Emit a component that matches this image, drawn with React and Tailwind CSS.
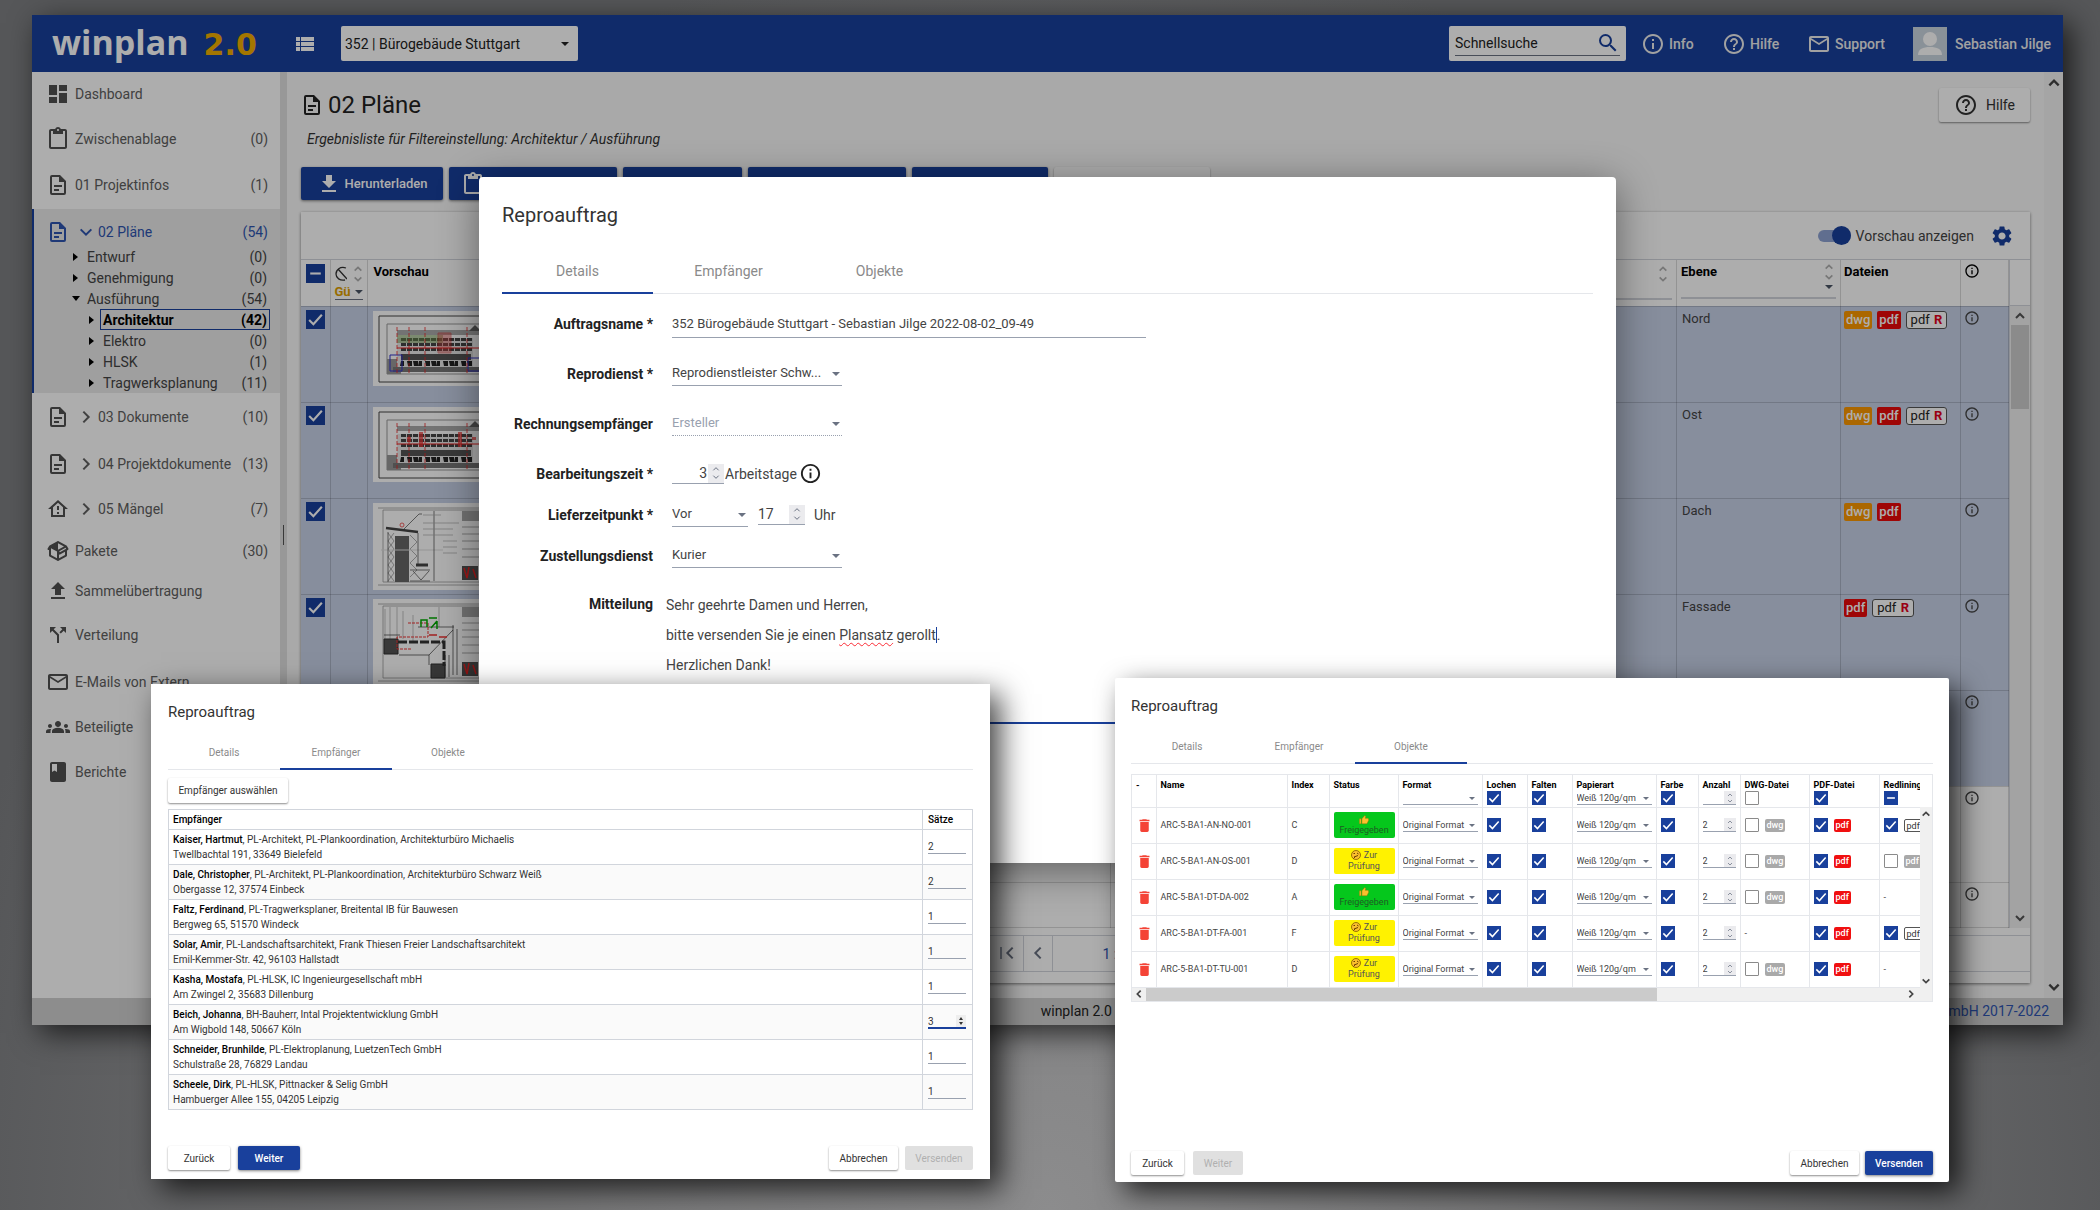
import {
  MdBook,
  MdCallSplit,
  MdContentPaste,
  MdDashboard,
  MdDelete,
  MdGroups,
  MdHelpOutline,
  MdInfoOutline,
  MdMailOutline,
  MdSearch,
  MdSettings,
  MdViewList,
} from 'react-icons/md';
import clsx from 'clsx';

function PathIcon({ d, className }) {
  return (
    <svg viewBox="0 0 24 24" fill="currentColor" className={className} aria-hidden="true">
      <path d={d} />
    </svg>
  );
}

const DOCUMENT =
  'M6,2A2,2 0 0,0 4,4V20A2,2 0 0,0 6,22H18A2,2 0 0,0 20,20V8L14,2H6M6,4H13V9H18V20H6V4M8,12V14H16V12H8M8,16V18H13V16H8Z';
const HOUSE = 'M12 5.69l5 4.5V18H7v-7.81l5-4.5M12 3L2 12h3v8h14v-8h3L12 3m-1 6v4h2V9zm0 6h2v2h-2z';
const PACKAGE =
  'M2,10.96C1.5,10.68 1.35,10.07 1.63,9.59L3.13,7C3.24,6.8 3.41,6.66 3.6,6.58L11.43,2.18C11.59,2.06 11.79,2 12,2C12.21,2 12.41,2.06 12.57,2.18L20.47,6.62C20.66,6.72 20.82,6.88 20.91,7.08L22.36,9.6C22.64,10.08 22.47,10.69 22,10.96L21,11.54V16.5C21,16.88 20.79,17.21 20.47,17.38L12.57,21.82C12.41,21.94 12.21,22 12,22C11.79,22 11.59,21.94 11.43,21.82L3.53,17.38C3.21,17.21 3,16.88 3,16.5V10.96C2.7,11.13 2.32,11.14 2,10.96M12,4.15V4.15L12,10.85V10.85L17.96,7.5L12,4.15M5,15.91L11,19.29V12.58L5,9.21V15.91M19,15.91V12.69L14,15.59C13.67,15.77 13.3,15.76 13,15.6V19.29L19,15.91M13.85,13.36L20.13,9.73L19.55,8.72L13.27,12.35L13.85,13.36Z';
const UPLOAD = 'M9 16h6v-6h4l-7-7-7 7h4zm-4 2h14v2H5z';
const DOWNLOAD = 'M19 9h-4V3H9v6H5l7 7 7-7zM5 18v2h14v-2H5z';

const DocumentIcon = (props) => <PathIcon d={DOCUMENT} {...props} />;
const HouseIcon = (props) => <PathIcon d={HOUSE} {...props} />;
const PackageIcon = (props) => <PathIcon d={PACKAGE} {...props} />;
const UploadIcon = (props) => <PathIcon d={UPLOAD} {...props} />;

const chevrons = {
  up: 'M2 8 L6 4 L10 8',
  down: 'M2 4 L6 8 L10 4',
  left: 'M8 2 L4 6 L8 10',
  right: 'M4 2 L8 6 L4 10',
};

function Chevron({ dir, className = 'size-3', width = 2 }) {
  return (
    <svg viewBox="0 0 12 12" className={className} fill="none" stroke="currentColor" strokeWidth={width} aria-hidden="true">
      <path d={chevrons[dir]} />
    </svg>
  );
}

function Caret({ className = 'w-2 h-1' }) {
  return (
    <svg viewBox="0 0 8 4" className={className} fill="currentColor" aria-hidden="true">
      <path d="M0 0h8L4 4z" />
    </svg>
  );
}

function Checkbox({ state = 'on', small, label }) {
  const size = small ? 'size-[14px]' : 'size-[19px]';
  return (
    <span className="inline-grid align-middle">
      <input
        type="checkbox"
        aria-label={label}
        defaultChecked={state !== 'off'}
        className={clsx(
          'appearance-none [grid-area:1/1]',
          size,
          state === 'off' ? 'rounded-[1px] border border-[#8a8a8a] bg-white' : 'bg-[#19409c]',
        )}
      />
      {state !== 'off' && (
        <svg viewBox="0 0 18 18" className={clsx('pointer-events-none [grid-area:1/1]', size)} fill="none" stroke="white" strokeWidth="2" aria-hidden="true">
          <path d={state === 'on' ? 'M3 9.5l4 4 8-9' : 'M4 9h10'} />
        </svg>
      )}
    </span>
  );
}

function Select({ id, label, value, disabled, className, small }) {
  return (
    <span className={clsx('grid items-center', className)}>
      <select
        id={id}
        aria-label={label}
        disabled={disabled}
        className={clsx(
          'w-full appearance-none border-b bg-transparent outline-none [grid-area:1/1]',
          small ? 'h-[14px] text-[9px] leading-[12px] font-normal' : 'h-6 text-[13px]',
          disabled ? 'border-dotted border-gray-400 text-gray-400' : 'border-gray-400 text-[#444]',
        )}
      >
        <option>{value}</option>
      </select>
      <Caret className={clsx('pointer-events-none justify-self-end text-gray-500 [grid-area:1/1]', small ? 'mr-[3px] h-[3px] w-[6px]' : 'mr-[2px] h-1 w-2')} />
    </span>
  );
}

function NumberField({ id, label, value, small, className, right }) {
  return (
    <span className={clsx('flex items-stretch border-b border-gray-400', small ? 'h-[14px]' : 'h-5', className)}>
      <input
        id={id}
        aria-label={label}
        type="number"
        defaultValue={value}
        className={clsx(
          'w-0 flex-1 bg-transparent outline-none [appearance:textfield] [&::-webkit-inner-spin-button]:hidden',
          small ? 'text-[9px]' : 'text-sm',
          right && 'pr-px text-right',
        )}
      />
      <span className={clsx('flex shrink-0 flex-col items-center justify-center bg-[#ebebee] text-gray-500', small ? 'w-3' : 'w-4')}>
        <Chevron dir="up" className={small ? 'size-[6px]' : 'size-2'} width={1.5} />
        <Chevron dir="down" className={small ? 'size-[6px]' : 'size-2'} width={1.5} />
      </span>
    </span>
  );
}

function Button({ children, kind = 'plain', className }) {
  return (
    <button
      type="button"
      disabled={kind === 'disabled'}
      className={clsx(
        'flex shrink-0 items-center justify-center rounded-[2px]',
        kind === 'plain' && 'bg-white text-[#333] shadow-[0_1px_2px_rgba(0,0,0,0.45)]',
        kind === 'primary' && 'bg-[#19409c] font-medium text-white shadow-[0_1px_3px_rgba(0,0,0,0.5)]',
        kind === 'disabled' && 'bg-[#e0e0e0] text-[#b0b0b0]',
        className,
      )}
    >
      {children}
    </button>
  );
}

/* ---------- top bar ---------- */

function TopBar() {
  return (
    <header className="flex h-[57px] items-center bg-[#19409c] text-sm text-white">
      <a href="#" className="flex w-[261px] items-baseline gap-[15px] pl-5 leading-none">
        <span className="font-['Open_Sans',sans-serif] text-[34px] leading-[44px] font-bold">winplan</span>
        <span className="font-['DejaVu_Sans',sans-serif] text-[30px] leading-[44px] font-bold text-[#f2ae00]">2.0</span>
      </a>
      <button type="button" aria-label="Menü">
        <MdViewList className="size-6" />
      </button>
      <span className="ml-6 grid h-[35px] w-[237px] items-center rounded-[2px] bg-white text-[#222]">
        <select aria-label="Projekt" className="h-full w-full appearance-none pl-1 outline-none [grid-area:1/1]">
          <option>352 | Bürogebäude Stuttgart</option>
        </select>
        <Caret className="pointer-events-none mr-[9px] h-1 w-2 justify-self-end [grid-area:1/1]" />
      </span>
      <label className="ml-auto flex h-[35px] w-[177px] items-center rounded-[2px] bg-white px-[6px] text-[#222]">
        <span className="flex h-6 w-full items-center border-b border-gray-500">
          <input type="search" placeholder="Schnellsuche" className="min-w-0 flex-1 outline-none placeholder:text-[#222]" />
          <MdSearch className="size-6 text-[#19409c]" />
        </span>
      </label>
      <nav className="flex items-center font-medium text-[#eee]">
        <a href="#" className="ml-[15px] flex w-[81px] items-center gap-1">
          <MdInfoOutline className="size-6" />
          Info
        </a>
        <a href="#" className="flex w-[85px] items-center gap-1">
          <MdHelpOutline className="size-6" />
          Hilfe
        </a>
        <a href="#" className="flex w-[106px] items-center gap-1">
          <MdMailOutline className="size-6" />
          Support
        </a>
        <a href="#" className="flex w-[150px] items-center gap-2">
          <svg viewBox="0 0 34 34" className="size-[34px]" aria-hidden="true">
            <path fill="#cbd6e0" d="M0 0h34v34H0z" />
            <circle cx="17" cy="12" r="7" fill="#fff" />
            <path fill="#fff" d="M5 28c0-6 5-8 12-8s12 2 12 8z" />
          </svg>
          Sebastian Jilge
        </a>
      </nav>
    </header>
  );
}

/* ---------- sidebar ---------- */

const topItems = [
  { icon: MdDashboard, label: 'Dashboard', row: 'h-11' },
  { icon: MdContentPaste, label: 'Zwischenablage', count: 0, row: 'h-[45px]' },
  { icon: DocumentIcon, label: '01 Projektinfos', count: 1, row: 'h-12' },
];

const treeItems = [
  { label: 'Entwurf', count: 0 },
  { label: 'Genehmigung', count: 0 },
  { label: 'Ausführung', count: 54, open: true },
  { label: 'Architektur', count: 42, deep: true, active: true },
  { label: 'Elektro', count: 0, deep: true },
  { label: 'HLSK', count: 1, deep: true },
  { label: 'Tragwerksplanung', count: 11, deep: true },
];

const bottomItems = [
  { icon: DocumentIcon, label: '03 Dokumente', count: 10, row: 'h-12', group: true },
  { icon: DocumentIcon, label: '04 Projektdokumente', count: 13, row: 'h-[45px]', group: true },
  { icon: HouseIcon, label: '05 Mängel', count: 7, row: 'h-[45px]', group: true },
  { icon: PackageIcon, label: 'Pakete', count: 30, row: 'h-10' },
  { icon: UploadIcon, label: 'Sammelübertragung', row: 'h-10' },
  { icon: MdCallSplit, label: 'Verteilung', row: 'h-12' },
  { icon: MdMailOutline, label: 'E-Mails von Extern', row: 'h-[45px]' },
  { icon: MdGroups, label: 'Beteiligte', row: 'h-[45px]' },
  { icon: MdBook, label: 'Berichte', row: 'h-[45px]' },
];

function NavItem({ item }) {
  const Icon = item.icon;
  return (
    <li>
      <a href="#" className={clsx('flex items-center pr-3 pl-[14px]', item.row)}>
        <Icon className="mr-[5px] size-6 shrink-0 text-[#505050]" />
        {item.group && <Chevron dir="right" className="mr-1 ml-[3px] size-4" width={1.5} />}
        <span className="whitespace-nowrap">{item.label}</span>
        {item.count !== undefined && <span className="ml-auto">({item.count})</span>}
      </a>
    </li>
  );
}

function Sidebar() {
  return (
    <nav className="w-[248px] shrink-0 bg-white text-sm text-[#606060]">
      <ul>
        {topItems.map((item) => (
          <NavItem key={item.label} item={item} />
        ))}
      </ul>
      <div className="border-l-2 border-[#19409c] bg-[#eaeaea] pr-[10px]">
        <a href="#" className="flex h-[37px] items-center pt-2 pr-[2px] pl-3 text-[#2f55b0]">
          <DocumentIcon className="mr-[5px] size-6" />
          <Chevron dir="down" className="mr-1 ml-[3px] size-4" width={1.5} />
          02 Pläne
          <span className="ml-auto">(54)</span>
        </a>
        <ul className="text-[#444]">
          {treeItems.map((item) => (
            <li key={item.label} className={item.deep ? 'pl-[54px]' : 'pl-[38px]'}>
              <a href="#" className="flex h-[21px] items-center">
                <svg viewBox="0 0 8 8" className={clsx('mr-1 size-2 shrink-0', item.open && 'rotate-90')} aria-hidden="true">
                  <path d="M1 0l5 4-5 4z" />
                </svg>
                <span
                  className={clsx(
                    'flex h-full flex-1 items-center justify-between border px-[2px]',
                    item.active ? 'border-[#19409c] font-bold text-black' : 'border-transparent',
                  )}
                >
                  {item.label}
                  <span>({item.count})</span>
                </span>
              </a>
            </li>
          ))}
        </ul>
      </div>
      <ul>
        {bottomItems.map((item) => (
          <NavItem key={item.label} item={item} />
        ))}
      </ul>
    </nav>
  );
}

/* ---------- plan list ---------- */

function FacadePreview({ marked }) {
  const cols = Array.from({ length: 19 }, (_, i) => 28 + i * 6);
  return (
    <svg viewBox="0 0 150 75" className="h-[75px] w-[150px] bg-white" aria-hidden="true">
      <path d="M6 5h140v66H6z" fill="none" stroke="#444" />
      <path d="M14 13h130v50H14z" fill="none" stroke="#999" />
      <path d="M24 19h118v5H24z" fill="#aaa" />
      <path d="M96 20l6-6 6 6z" fill="#666" />
      <path d="M14 48h14v15H14z" fill="#999" />
      <path d="M24 27h76v33H24z" fill="#e8e8e8" />
      {[27, 32, 37].map((y) => cols.slice(0, 12).map((x) => <path key={`${x}-${y}`} d={`M${x} ${y}h5v3h-5z`} fill="#444" />))}
      <path d="M28 43h70v6H28z" fill="#555" />
      {cols.slice(0, 12).map((x, i) => (
        <path key={x} d={`M${x} 50h${i % 3 ? 5 : 3}v5h-4z`} fill="#222" />
      ))}
      <path d="M20 56h100v5H20z" fill="#777" />
      {marked && <path d="M24 24h46v8H24z" fill="#6d9a4a" opacity=".5" />}
      {marked && <path d="M65 22h13v20H65z" fill="#e04040" opacity=".4" stroke="#d00" />}
      {marked && <path d="M17 44h12v16H17zM95 47h12v13H95z" fill="none" stroke="#33c" />}
      {!marked && <path d="M34 30h4v5h-4zM46 25h4v15h-4zM85 25h4v15h-4zM99 30h4v3h-4z" fill="#e33" opacity=".7" />}
      <path d="M24 37h110" stroke="#e22" />
      <path d="M24 16v47M36 16v47M52 16v47M94 16v47" stroke="#e22" strokeWidth=".8" strokeDasharray="4 2" />
    </svg>
  );
}

function SectionPreview({ marked }) {
  return (
    <svg viewBox="0 0 150 87" className="h-[87px] w-[150px] bg-white" aria-hidden="true">
      <path d="M5 5h140M10 7h132v72H10zM5 82h140" fill="none" stroke="#999" strokeWidth=".8" />
      <path d="M89 8h40v10H89z" fill="#aaa" />
      <path d="M89 24h40M89 31h40M89 38h40M89 46h40M89 54h40" stroke="#888" strokeWidth=".7" />
      <path d="M89 63h16v14H89z" fill="#555" />
      <path d="M91 65l3 10M96 64l-2 11M100 66l3 9" stroke="#e22" strokeWidth="1.5" />
      {marked ? (
        <g fill="none" stroke="#333">
          <path d="M12 10v30M17 8v32M24 8v32M30 12v28M40 16v28M66 8v20" stroke="#999" strokeWidth=".6" />
          <path d="M11 40h14v15H11zM58 65h14v14H58z" fill="#555" />
          <path d="M25 43h46v24" strokeWidth="3" strokeDasharray="9 2" />
          <path d="M26 56h30v10M56 56l24-25M80 26v50M84 30v46M72 56v22M76 56v22M11 36h16M45 28h36" strokeWidth=".7" />
          <path d="M35 24h20v14H24v12h14" stroke="#e33" strokeDasharray="3 1" />
          <path d="M48 28v-7h6v7M56 19h8M58 29l6-7M64 22v8" stroke="#0a0" strokeWidth="1.5" />
          <path d="M56 36h8M66 38h8" stroke="#e33" strokeWidth="1.5" />
        </g>
      ) : (
        <g fill="none" stroke="#444">
          <path d="M22 33h14v46H22z" fill="#666" stroke="none" />
          <path d="M13 25l32 4" strokeWidth="2.5" />
          <path d="M15 30l6 8-6 8 6 8-6 8 6 8-6 8M21 30l-6 8 6 8-6 8 6 8-6 8 6 8M37 32l7 7-7 7 7 7-7 7 7 7-7 7" stroke="#777" strokeWidth=".6" />
          <path d="M8 47h62" stroke="#ddd" />
          <path d="M43 62h12" strokeWidth="3" />
          <path d="M37 67h20M37 78h20M40 68l8 9 8-9M30 27l16-16h3M61 8v70M15 29v50M45 30v32" strokeWidth=".7" />
          <path d="M50 12h18M50 20h36M50 26h30M50 32h30M70 38h14M70 44h14M70 50h14" stroke="#aaa" strokeWidth=".7" />
          <circle cx="29" cy="22" r="2" stroke="#e22" strokeWidth=".7" />
        </g>
      )}
    </svg>
  );
}

const previews = {
  nord: <FacadePreview marked />,
  ost: <FacadePreview />,
  dach: <SectionPreview />,
  fassade: <SectionPreview marked />,
};

const plans = [
  { ebene: 'Nord', files: ['dwg', 'pdf', 'pdfR'], preview: 'nord', selected: true },
  { ebene: 'Ost', files: ['dwg', 'pdf', 'pdfR'], preview: 'ost', selected: true },
  { ebene: 'Dach', files: ['dwg', 'pdf'], preview: 'dach', selected: true },
  { ebene: 'Fassade', files: ['pdf', 'pdfR'], preview: 'fassade', selected: true },
  { ebene: '', files: [], selected: true },
  { ebene: '', files: [] },
  { ebene: '', files: [], last: true },
];

function FileBadge({ type }) {
  if (type === 'pdfR') {
    return (
      <span className="h-[18px] rounded-[3px] border border-[#555] bg-white px-1 text-[13px] leading-4 text-[#222]">
        pdf <b className="ml-px text-[#e3001b]">R</b>
      </span>
    );
  }
  return (
    <span
      className={clsx(
        'h-[18px] rounded-[2px] px-[2px] text-[13px] leading-[18px] font-medium text-white',
        type === 'dwg' ? 'bg-[#fd9800]' : 'bg-[#ea0a0a]',
      )}
    >
      {type}
    </span>
  );
}

function SortArrows() {
  return (
    <span className="flex flex-col text-[#b0b0b0]">
      <Chevron dir="up" className="size-[10px]" />
      <Chevron dir="down" className="size-[10px]" />
    </span>
  );
}

function PlanTable() {
  const cell = 'border-r border-b border-black/15 align-top';
  return (
    <div className="flex">
      <div className="min-w-0 flex-1">
        <table className="w-full table-fixed border-collapse text-left text-[13px] text-[#444]">
          <colgroup>
            <col className="w-[29px]" />
            <col className="w-[37px]" />
            <col className="w-[743px]" />
            <col />
            <col className="w-[164px]" />
            <col className="w-[120px]" />
            <col className="w-[48px]" />
          </colgroup>
          <thead>
            <tr className="h-[46px] text-black">
              <th className={clsx(cell, 'pt-1 pl-[5px] leading-none')}>
                <Checkbox state="mixed" label="Alle auswählen" />
              </th>
              <th className={clsx(cell, 'px-1 pt-1')}>
                <span className="flex items-center justify-between">
                  <svg viewBox="0 0 12 16" className="h-4 w-3" fill="none" stroke="#333" strokeWidth="1.3" aria-hidden="true">
                    <path d="M11 2C5 0 1 4 1 8s4 7 9 6M3 3l9 10" />
                  </svg>
                  <SortArrows />
                </span>
                <span className="flex items-center gap-1 border-b border-gray-500 leading-[15px] text-[#e0a000]">
                  Gü
                  <Caret className="h-1 w-2 text-gray-600" />
                </span>
              </th>
              <th className={clsx(cell, 'pt-[2px] pl-[6px]')}>Vorschau</th>
              <th className={clsx(cell, 'px-1 pt-1')}>
                <span className="flex h-9 justify-end border-b-2 border-gray-300 pr-1">
                  <SortArrows />
                </span>
              </th>
              <th className={clsx(cell, 'px-1 pt-[2px]')}>
                <span className="flex h-[37px] justify-between border-b-2 border-gray-300 pr-[2px]">
                  Ebene
                  <span className="flex flex-col items-center justify-between">
                    <SortArrows />
                    <Caret className="mb-2 h-1 w-2 text-gray-600" />
                  </span>
                </span>
              </th>
              <th className={clsx(cell, 'pt-[2px] pl-[3px]')}>Dateien</th>
              <th className={clsx(cell, 'pt-[3px] pl-[3px]')}>
                <MdInfoOutline className="size-4" />
              </th>
            </tr>
          </thead>
          <tbody>
            {plans.map((plan, i) => (
              <tr key={i} className={clsx(plan.last ? 'h-[45px]' : 'h-24', plan.selected && 'bg-[#c7d1e8]')}>
                <td className={clsx(cell, 'pt-[3px] pl-[5px] leading-none')}>
                  <Checkbox state={plan.selected ? 'on' : 'off'} label={`Plan ${i + 1}`} />
                </td>
                <td className={cell} />
                <td className={clsx(cell, 'pt-1 pl-[5px]')}>{previews[plan.preview]}</td>
                <td className={cell} />
                <td className={clsx(cell, 'pt-[2px] pl-[5px]')}>{plan.ebene}</td>
                <td className={clsx(cell, 'pt-1 pl-[3px]')}>
                  <span className="flex gap-[5px]">
                    {plan.files.map((type) => (
                      <FileBadge key={type} type={type} />
                    ))}
                  </span>
                </td>
                <td className={clsx(cell, 'pt-[3px] pl-[3px]')}>
                  <MdInfoOutline className="size-4" />
                </td>
              </tr>
            ))}
          </tbody>
        </table>
      </div>
      <div className="flex w-[21px] shrink-0 flex-col items-center border-l border-gray-300 text-[#555]">
        <div className="h-[46px] w-full border-b border-gray-300" />
        <div className="flex w-full flex-1 flex-col items-center bg-[#f1f1f1] py-1">
          <Chevron dir="up" />
          <div className="mt-[3px] h-[84px] w-[18px] bg-[#cdcdcd]" />
          <Chevron dir="down" className="mt-auto size-3" />
        </div>
      </div>
    </div>
  );
}

const toolbarButtons = ['w-[168px]', 'w-[119px]', 'w-[158px]', 'w-[136px]'];

function PlanPage() {
  return (
    <main className="min-w-0 flex-1 bg-[#fafafa] pr-[14px] pb-[15px] pl-[14px]">
      <div className="mt-4 flex h-[34px] items-center text-2xl text-[#222]">
        <DocumentIcon className="mr-1 -ml-px size-6" />
        <h1>02 Pläne</h1>
        <Button className="ml-auto h-[34px] w-[91px] gap-2 text-sm">
          <MdHelpOutline className="size-6" />
          Hilfe
        </Button>
      </div>
      <p className="mt-[7px] pl-[6px] text-sm leading-5 text-[#333] italic">
        Ergebnisliste für Filtereinstellung: Architektur / Ausführung
      </p>
      <div className="mt-[18px] flex h-[33px] gap-[6px]">
        <Button kind="primary" className="w-[142px] gap-1 text-[13px]">
          <PathIcon d={DOWNLOAD} className="size-6" />
          Herunterladen
        </Button>
        {toolbarButtons.map((width, i) => (
          <Button key={width} kind="primary" className={clsx('pl-3', width)}>
            {i === 0 && <MdContentPaste className="mr-auto size-6" />}
          </Button>
        ))}
        <Button className="w-[156px]" />
      </div>
      <section className="mt-3 bg-white shadow-[0_1px_3px_rgba(0,0,0,0.5)]">
        <div className="flex h-12 items-center justify-end border-b border-gray-300 pr-4 text-sm text-[#444]">
          <label className="flex items-center gap-[5px]">
            <input type="checkbox" role="switch" defaultChecked className="peer sr-only" />
            <span className="flex h-3 w-[33px] items-center justify-end rounded-full bg-[#8ea3d3]">
              <span className="size-[19px] rounded-full bg-[#19409c]" />
            </span>
            Vorschau anzeigen
          </label>
          <button type="button" aria-label="Einstellungen" className="ml-4">
            <MdSettings className="size-6 text-[#19409c]" />
          </button>
        </div>
        <PlanTable />
        <div className="pt-[7px] pb-[11px]">
          <div className="flex h-[37px] items-stretch justify-center border-y border-gray-300 text-gray-500">
            <button type="button" aria-label="Erste Seite" className="flex w-[29px] items-center justify-center border-r border-gray-300">
              <span className="h-3 w-[2px] bg-gray-400" />
              <Chevron dir="left" className="size-4" width={1.5} />
            </button>
            <button type="button" aria-label="Vorherige Seite" className="flex w-[29px] items-center justify-center border-r border-gray-300">
              <Chevron dir="left" className="size-4" width={1.5} />
            </button>
            <span className="w-[226px] pl-[50px] text-sm leading-9 text-[#2f55b0]">1 : 42</span>
            <span className="w-[58px]" />
          </div>
        </div>
      </section>
    </main>
  );
}

/* ---------- dialogs ---------- */

function Tabs({ active, small }) {
  return (
    <div role="tablist" className={clsx('flex border-b border-gray-200 text-[#8a8a8a]', small ? 'h-[37px] text-[10px]' : 'h-[49px] text-sm')}>
      {['Details', 'Empfänger', 'Objekte'].map((name) => (
        <button
          key={name}
          type="button"
          role="tab"
          aria-selected={name === active}
          className={clsx(
            '-mb-px border-b-2 pt-1',
            small ? 'w-[112px]' : 'w-[151px]',
            name === active ? 'border-[#19409c]' : 'border-transparent',
          )}
        >
          {name}
        </button>
      ))}
    </div>
  );
}

function Field({ label, htmlFor, className, children }) {
  return (
    <div className={clsx('flex items-center', className)}>
      <label htmlFor={htmlFor} className="w-[151px] text-right font-bold text-[#222]">
        {label}
      </label>
      <div className="ml-[19px] flex flex-1 items-center">{children}</div>
    </div>
  );
}

function DetailsDialog() {
  return (
    <section
      role="dialog"
      aria-label="Reproauftrag Details"
      className="absolute top-[177px] right-[484px] left-[479px] min-h-[686px] rounded-[4px] bg-white px-[23px] text-sm text-[#444] shadow-[0_8px_40px_rgba(0,0,0,0.45)]"
    >
      <h2 className="pt-[23px] text-[20px] leading-[30px] text-[#333]">Reproauftrag</h2>
      <div className="mt-[15px]">
        <Tabs active="Details" />
      </div>
      <Field label="Auftragsname *" htmlFor="name" className="mt-[5px] h-[50px]">
        <input
          id="name"
          defaultValue="352 Bürogebäude Stuttgart - Sebastian Jilge 2022-08-02_09-49"
          className="h-7 w-[474px] border-b border-gray-400 text-[13px] outline-none"
        />
      </Field>
      <Field label="Reprodienst *" htmlFor="service" className="h-[50px]">
        <Select id="service" value="Reprodienstleister Schw..." className="w-[170px]" />
      </Field>
      <Field label="Rechnungsempfänger" htmlFor="invoice" className="h-[50px]">
        <Select id="invoice" value="Ersteller" disabled className="w-[170px]" />
      </Field>
      <Field label="Bearbeitungszeit *" htmlFor="days" className="h-[49px]">
        <NumberField id="days" value={3} right className="w-[52px]" />
        <span className="ml-px">Arbeitstage</span>
        <MdInfoOutline className="ml-[2px] size-[23px] text-[#222]" />
      </Field>
      <Field label="Lieferzeitpunkt *" htmlFor="when" className="h-[33px]">
        <Select id="when" value="Vor" className="w-[76px]" />
        <NumberField label="Uhrzeit" value={17} className="ml-[10px] w-[47px]" />
        <span className="ml-[9px]">Uhr</span>
      </Field>
      <Field label="Zustellungsdienst" htmlFor="delivery" className="h-[50px]">
        <Select id="delivery" value="Kurier" className="w-[170px]" />
      </Field>
      <div className="mt-[9px] flex">
        <label htmlFor="message" className="w-[151px] pt-1 text-right font-bold text-[#222]">
          Mitteilung
        </label>
        <div
          id="message"
          role="textbox"
          aria-multiline="true"
          aria-label="Mitteilung"
          className="ml-[13px] h-[134px] flex-1 border-b-2 border-[#19409c] leading-[30px]"
        >
          <p>Sehr geehrte Damen und Herren,</p>
          <p>
            bitte versenden Sie je einen{' '}
            <span className="underline decoration-red-500 decoration-wavy decoration-1 underline-offset-2">Plansatz</span> gerollt
            <span className="border-l border-[#19409c]">.</span>
          </p>
          <p>Herzlichen Dank!</p>
        </div>
      </div>
    </section>
  );
}

const recipients = [
  ['Kaiser, Hartmut', 'PL-Architekt, PL-Plankoordination, Architekturbüro Michaelis', 'Twellbachtal 191, 33649 Bielefeld', 2],
  ['Dale, Christopher', 'PL-Architekt, PL-Plankoordination, Architekturbüro Schwarz Weiß', 'Obergasse 12, 37574 Einbeck', 2],
  ['Faltz, Ferdinand', 'PL-Tragwerksplaner, Breitental IB für Bauwesen', 'Bergweg 65, 51570 Windeck', 1],
  ['Solar, Amir', 'PL-Landschaftsarchitekt, Frank Thiesen Freier Landschaftsarchitekt', 'Emil-Kemmer-Str. 42, 96103 Hallstadt', 1],
  ['Kasha, Mostafa', 'PL-HLSK, IC Ingenieurgesellschaft mbH', 'Am Zwingel 2, 35683 Dillenburg', 1],
  ['Beich, Johanna', 'BH-Bauherr, Intal Projektentwicklung GmbH', 'Am Wigbold 148, 50667 Köln', 3],
  ['Schneider, Brunhilde', 'PL-Elektroplanung, LuetzenTech GmbH', 'Schulstraße 28, 76829 Landau', 1],
  ['Scheele, Dirk', 'PL-HLSK, Pittnacker & Selig GmbH', 'Hambuerger Allee 155, 04205 Leipzig', 1],
];

function RecipientsDialog() {
  return (
    <section
      role="dialog"
      aria-label="Reproauftrag Empfänger"
      className="absolute top-[684px] left-[151px] flex min-h-[495px] w-[839px] flex-col bg-white px-[17px] pb-[9px] text-[10px] text-[#333] shadow-[10px_10px_28px_rgba(0,0,0,0.75)]"
    >
      <h2 className="pt-[18px] text-[15px] leading-5">Reproauftrag</h2>
      <div className="mt-[11px]">
        <Tabs active="Empfänger" small />
      </div>
      <Button className="mt-2 h-[25px] w-[120px]">Empfänger auswählen</Button>
      <table className="mt-[6px] w-full table-fixed border-collapse border border-gray-300 text-left">
        <colgroup>
          <col />
          <col className="w-[50px]" />
        </colgroup>
        <thead>
          <tr className="h-5 border-b border-gray-300 text-black">
            <th className="border-r border-gray-300 pl-1 font-medium">Empfänger</th>
            <th className="pl-[5px] font-medium">Sätze</th>
          </tr>
        </thead>
        <tbody>
          {recipients.map(([name, role, address, sets]) => (
            <tr key={name} className="h-[35px] border-b border-gray-300 even:bg-[#fafafa]">
              <td className="border-r border-gray-300 pl-1 leading-[15px]">
                <b className="font-medium text-black">{name}</b>, {role}
                <br />
                {address}
              </td>
              <td className="pr-[6px] pl-[5px]">
                <span className={clsx('flex h-[14px] items-center', sets === 3 ? 'border-b-2 border-[#19409c]' : 'border-b border-gray-400')}>
                  <input
                    type="number"
                    aria-label={`Sätze für ${name}`}
                    defaultValue={sets}
                    className="w-0 flex-1 outline-none [appearance:textfield] [&::-webkit-inner-spin-button]:hidden"
                  />
                  {sets === 3 && (
                    <svg viewBox="0 0 10 12" className="h-3 w-[10px]" aria-hidden="true">
                      <path fill="#eee" d="M0 0h10v12H0z" />
                      <path fill="#333" d="M3 5l2-3 2 3zM3 7l2 3 2-3z" />
                    </svg>
                  )}
                </span>
              </td>
            </tr>
          ))}
        </tbody>
      </table>
      <footer className="mt-auto flex h-6 text-[10px]">
        <Button className="w-[62px]">Zurück</Button>
        <Button kind="primary" className="ml-2 w-[62px]">
          Weiter
        </Button>
        <Button className="ml-auto w-[69px]">Abbrechen</Button>
        <Button kind="disabled" className="ml-[7px] w-[68px]">
          Versenden
        </Button>
      </footer>
    </section>
  );
}

const objects = [
  { name: 'ARC-5-BA1-AN-NO-001', index: 'C', approved: true, dwg: true, red: 'on' },
  { name: 'ARC-5-BA1-AN-OS-001', index: 'D', dwg: true, red: 'off' },
  { name: 'ARC-5-BA1-DT-DA-002', index: 'A', approved: true, dwg: true },
  { name: 'ARC-5-BA1-DT-FA-001', index: 'F', red: 'on' },
  { name: 'ARC-5-BA1-DT-TU-001', index: 'D', dwg: true },
];

function Status({ approved }) {
  if (approved) {
    return (
      <span className="flex h-[26px] w-[61px] flex-col items-center justify-center rounded-[2px] bg-[#05c71c] leading-[11px] text-[#1f5a24]">
        <svg viewBox="0 0 24 24" className="size-[10px]" aria-hidden="true">
          <path fill="#fbc02d" stroke="#9a6a00" d="M1 21h4V9H1zM23 10c0-1-1-2-2-2h-6l1-5-2-2-7 8v12h12l4-8z" />
        </svg>
        Freigegeben
      </span>
    );
  }
  return (
    <span className="block h-[26px] w-[61px] rounded-[2px] bg-[#fff200] pt-[2px] text-center leading-[11px] text-[#555]">
      <svg viewBox="0 0 20 20" className="mr-[3px] inline size-[10px] align-[-2px]" aria-hidden="true">
        <circle cx="10" cy="10" r="9" fill="#fbc02d" stroke="#7a5200" strokeWidth="1.5" />
        <path d="M5 7h3M12 6l3 2M6 14l8-3M5 17l4-4" stroke="#6b3f00" strokeWidth="2" />
      </svg>
      Zur
      <br />
      Prüfung
    </span>
  );
}

function SmallBadge({ children, kind }) {
  return (
    <span
      className={clsx(
        'ml-[6px] inline-block h-[13px] rounded-[2px] px-[2px] align-middle text-[9px] leading-[13px]',
        kind === 'gray' && 'bg-[#a9a9a9] font-medium text-white',
        kind === 'red' && 'bg-[#f01010] font-medium text-white',
        kind === 'outline' && 'border border-[#555] leading-[11px] text-[#333]',
      )}
    >
      {children}
    </span>
  );
}

function HeadCheckbox({ title, state, label }) {
  return (
    <>
      <span className="block">{title}</span>
      <span className="flex">
        <Checkbox small state={state} label={label} />
      </span>
    </>
  );
}

function ObjectsTable() {
  const cell = 'border-r border-b border-gray-200 pl-1';
  const head = clsx(cell, 'pt-1 align-top font-bold whitespace-nowrap text-black');
  return (
    <div className="border border-gray-200 text-[9px] text-[#444]">
      <div className="flex">
        <div className="min-w-0 flex-1 overflow-hidden">
          <table className="w-full table-fixed border-collapse text-left leading-[12px]">
            <colgroup>
              <col className="w-[24px]" />
              <col />
              <col className="w-[42px]" />
              <col className="w-[69px]" />
              <col className="w-[84px]" />
              <col className="w-[45px]" />
              <col className="w-[45px]" />
              <col className="w-[84px]" />
              <col className="w-[42px]" />
              <col className="w-[42px]" />
              <col className="w-[69px]" />
              <col className="w-[70px]" />
              <col className="w-[41px]" />
            </colgroup>
            <thead>
              <tr className="h-8">
                <th className={head}>-</th>
                <th className={head}>Name</th>
                <th className={head}>Index</th>
                <th className={head}>Status</th>
                <th className={clsx(head, 'pr-1')}>
                  Format
                  <Select small label="Format für alle" value="" />
                </th>
                <th className={head}>
                  <HeadCheckbox title="Lochen" label="Alle lochen" />
                </th>
                <th className={head}>
                  <HeadCheckbox title="Falten" label="Alle falten" />
                </th>
                <th className={clsx(head, 'pr-1')}>
                  Papierart
                  <Select small label="Papierart für alle" value="Weiß 120g/qm" />
                </th>
                <th className={head}>
                  <HeadCheckbox title="Farbe" label="Alle in Farbe" />
                </th>
                <th className={clsx(head, 'pr-1')}>
                  Anzahl
                  <NumberField small label="Anzahl für alle" />
                </th>
                <th className={head}>
                  <HeadCheckbox title="DWG-Datei" state="off" label="Alle DWG-Dateien" />
                </th>
                <th className={head}>
                  <HeadCheckbox title="PDF-Datei" label="Alle PDF-Dateien" />
                </th>
                <th className={clsx(head, 'overflow-hidden border-r-0')}>
                  <HeadCheckbox title="Redlining" state="mixed" label="Alle Redlinings" />
                </th>
              </tr>
            </thead>
            <tbody>
              {objects.map((o) => (
                <tr key={o.name} className="h-9">
                  <td className={cell}>
                    <button type="button" aria-label={`${o.name} entfernen`} className="block">
                      <MdDelete className="size-[17px] text-[#f44336]" />
                    </button>
                  </td>
                  <td className={cell}>{o.name}</td>
                  <td className={cell}>{o.index}</td>
                  <td className={cell}>
                    <Status approved={o.approved} />
                  </td>
                  <td className={clsx(cell, 'pr-1')}>
                    <Select small label="Format" value="Original Format" />
                  </td>
                  <td className={cell}>
                    <Checkbox small label="Lochen" />
                  </td>
                  <td className={cell}>
                    <Checkbox small label="Falten" />
                  </td>
                  <td className={clsx(cell, 'pr-1')}>
                    <Select small label="Papierart" value="Weiß 120g/qm" />
                  </td>
                  <td className={cell}>
                    <Checkbox small label="Farbe" />
                  </td>
                  <td className={clsx(cell, 'pr-1')}>
                    <NumberField small label="Anzahl" value={2} />
                  </td>
                  <td className={cell}>
                    {o.dwg ? (
                      <>
                        <Checkbox small state="off" label="DWG-Datei" />
                        <SmallBadge kind="gray">dwg</SmallBadge>
                      </>
                    ) : (
                      '-'
                    )}
                  </td>
                  <td className={cell}>
                    <Checkbox small label="PDF-Datei" />
                    <SmallBadge kind="red">pdf</SmallBadge>
                  </td>
                  <td className={clsx(cell, 'overflow-hidden border-r-0 whitespace-nowrap')}>
                    {o.red ? (
                      <>
                        <Checkbox small state={o.red} label="Redlining" />
                        <SmallBadge kind={o.red === 'on' ? 'outline' : 'gray'}>pdf</SmallBadge>
                      </>
                    ) : (
                      '-'
                    )}
                  </td>
                </tr>
              ))}
            </tbody>
          </table>
        </div>
        <div className="flex w-3 shrink-0 flex-col">
          <div className="h-8" />
          <div className="flex flex-1 flex-col items-center justify-between bg-[#f0f0f0] py-[2px]">
            <Chevron dir="up" className="size-[10px]" />
            <Chevron dir="down" className="size-[10px]" />
          </div>
        </div>
      </div>
      <div className="flex h-[13px] items-center bg-[#f0f0f0] pr-4 pl-[2px]">
        <Chevron dir="left" className="size-[10px]" />
        <div className="ml-[2px] h-full w-[511px] bg-[#cbcbcb]" />
        <Chevron dir="right" className="ml-auto size-[10px]" />
      </div>
    </div>
  );
}

function ObjectsDialog() {
  return (
    <section
      role="dialog"
      aria-label="Reproauftrag Objekte"
      className="absolute top-[678px] right-[151px] flex min-h-[504px] w-[834px] flex-col rounded-[2px] bg-white px-4 pb-[7px] text-[10px] text-[#333] shadow-[10px_10px_28px_rgba(0,0,0,0.75)]"
    >
      <h2 className="pt-[18px] text-[15px] leading-5">Reproauftrag</h2>
      <div className="mt-[11px] mb-[10px]">
        <Tabs active="Objekte" small />
      </div>
      <ObjectsTable />
      <footer className="mt-auto flex h-6">
        <Button className="w-[53px]">Zurück</Button>
        <Button kind="disabled" className="ml-[9px] w-[50px]">
          Weiter
        </Button>
        <Button className="ml-auto w-[69px]">Abbrechen</Button>
        <Button kind="primary" className="ml-[6px] w-[68px]">
          Versenden
        </Button>
      </footer>
    </section>
  );
}

export default function App() {
  return (
    <div className="relative min-h-screen overflow-hidden bg-[radial-gradient(ellipse_at_50%_100%,#8c8c8d_0%,#7a7a7b_30%,#565759_75%)] pt-[15px] pr-[37px] pl-8 font-[Roboto,sans-serif]">
      <div className="relative shadow-[8px_8px_28px_rgba(0,0,0,0.7)]">
        <TopBar />
        <div className="flex">
          <Sidebar />
          <div className="flex w-[7px] shrink-0 items-center justify-center bg-[#e0e0e0] pb-[-34px]">
            <span className="h-5 w-px bg-[#555]" />
          </div>
          <PlanPage />
          <div className="flex w-[19px] flex-col items-center justify-between bg-[#f4f4f4] py-1 text-[#444]">
            <Chevron dir="up" className="size-[14px]" />
            <Chevron dir="down" className="size-[14px]" />
          </div>
        </div>
        <footer className="flex h-[27px] items-center justify-center bg-[#d0d0d0] text-sm text-[#222]">
          <span className="ml-auto pl-[196px]">winplan 2.0</span>
          <a href="#" className="mr-[14px] ml-auto text-[#2f55b0]">
            © GmbH 2017-2022
          </a>
        </footer>
        <div className="absolute inset-0 bg-black/32" />
      </div>
      <DetailsDialog />
      <RecipientsDialog />
      <ObjectsDialog />
    </div>
  );
}
